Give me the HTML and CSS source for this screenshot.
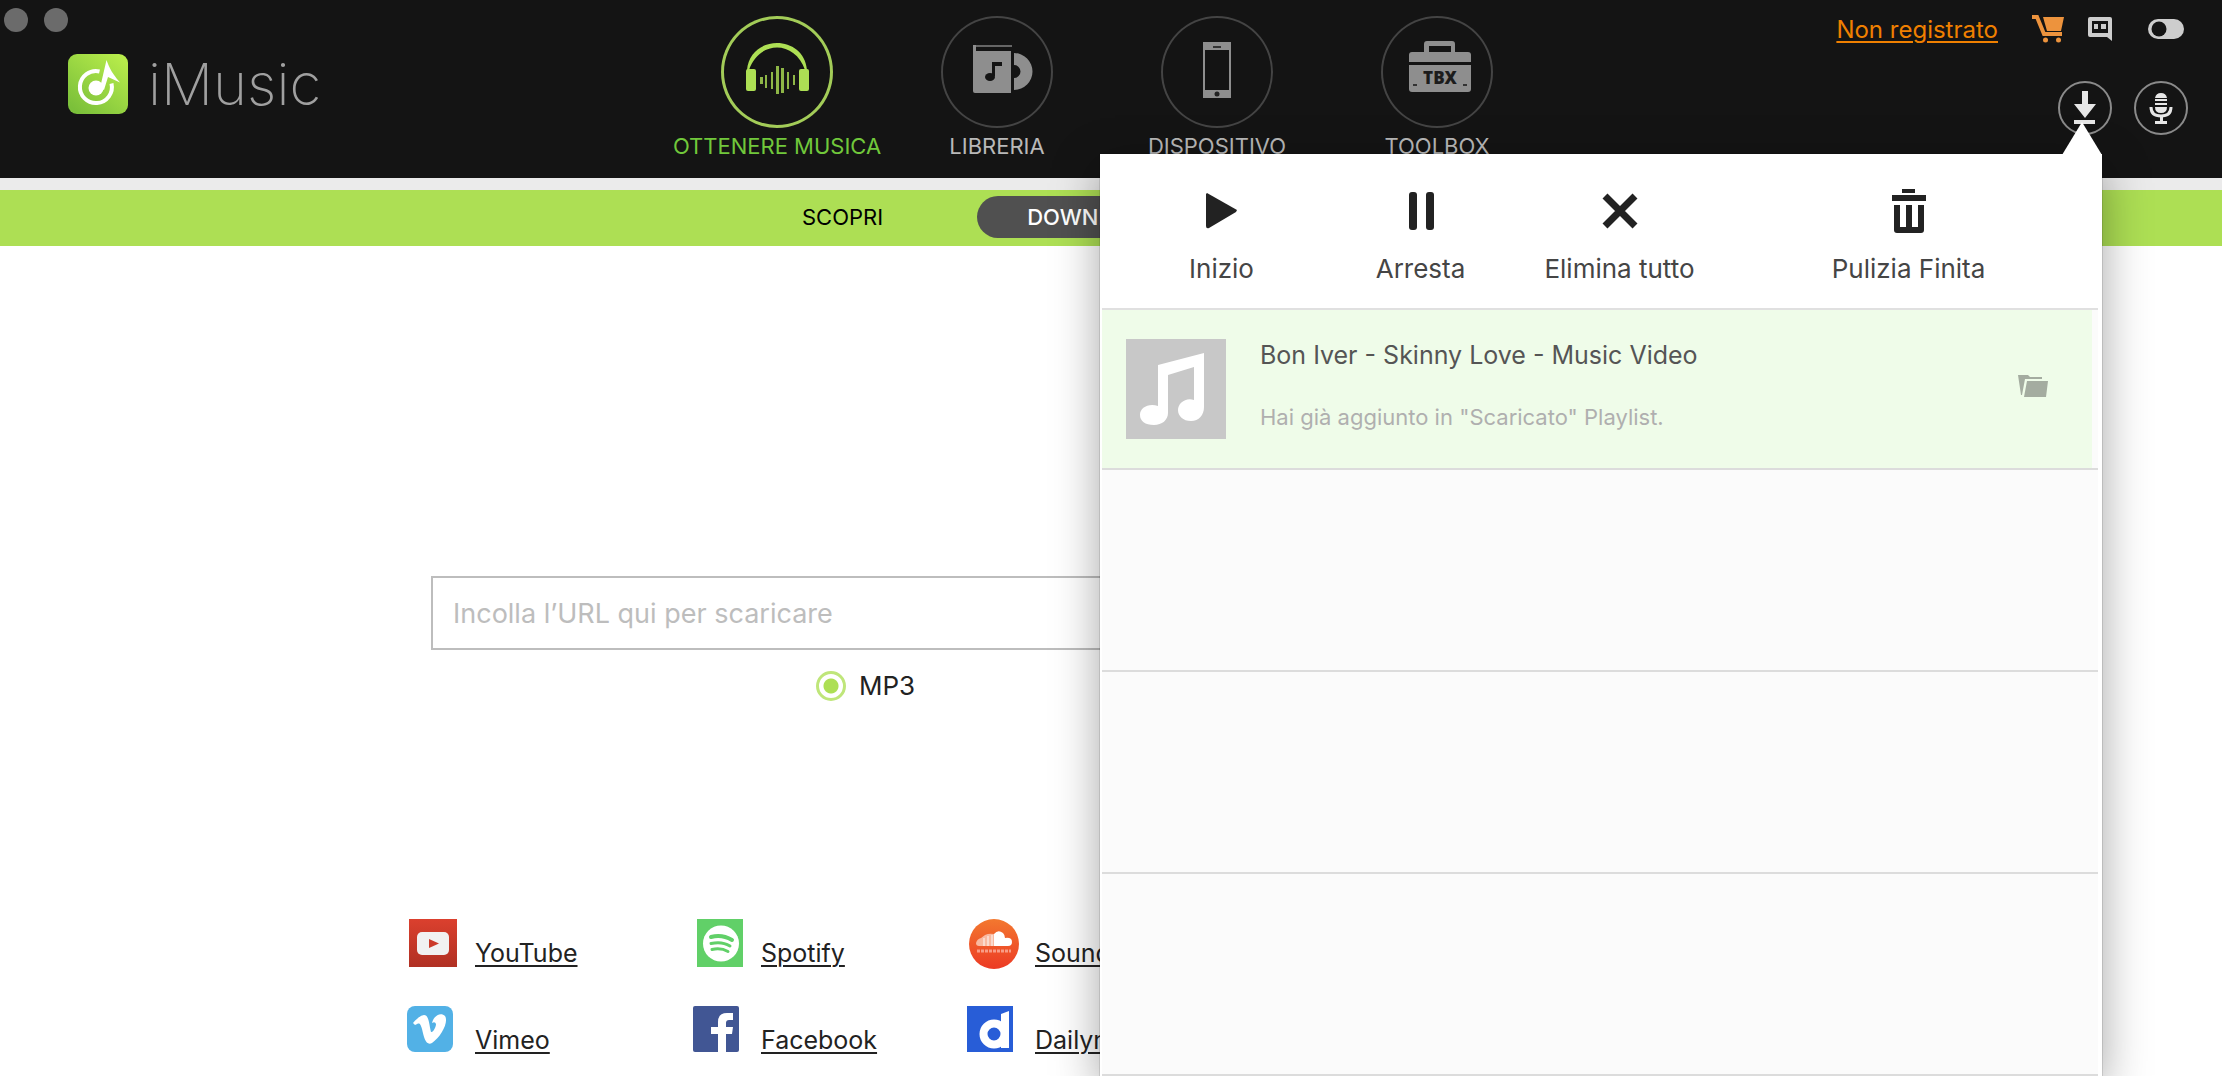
FILE: index.html
```html
<!DOCTYPE html>
<html lang="it">
<head>
  <meta charset="UTF-8">
  <title>iMusic</title>
  <link rel="stylesheet" href="styles.css">
</head>
<body>
  <header class="header">
    <div class="left">
      <div class="window-dots">
        <span class="dot"></span>
        <span class="dot"></span>
      </div>
      <div class="brand">
        <svg width="60" height="60" viewBox="0 0 60 60">
          <defs>
            <linearGradient id="logoFill" x1="1" y1="0" x2="0.2" y2="1">
              <stop offset="0" stop-color="#bdf04c"/>
              <stop offset="1" stop-color="#7bc03a"/>
            </linearGradient>
          </defs>
          <rect width="60" height="60" rx="9" fill="url(#logoFill)"/>
          <path d="M31.500 17.500A16 16 0 1 0 43.500 29.500" fill="none" stroke="#fff" stroke-width="4"/>
          <circle cx="28" cy="34" r="7.500" fill="#fff"/>
          <path d="M32 34L38.500 6C40.500 11 42 17 52 28.500L40 23L36 36Z" fill="#fff"/>
        </svg>
        <span class="brand-name">iMusic</span>
      </div>
    </div>

    <nav class="main-nav">
      <button class="nav-item active">
        <span class="nav-circle">
          <svg width="112" height="112" viewBox="0 0 112 112" fill="currentColor">
            <path d="M26 54C29 18 83 18 86 54L84 54C74 24 38 24 28 54Z"/>
            <rect x="25" y="53" width="10" height="22" rx="2"/>
            <rect x="78" y="53" width="10" height="22" rx="2"/>
            <g opacity="0.8">
              <rect x="39" y="61" width="3" height="7"/>
              <rect x="44" y="59" width="2" height="13"/>
              <rect x="50" y="56" width="2" height="17"/>
              <rect x="55" y="50" width="3" height="28"/>
              <rect x="60" y="52" width="3" height="25"/>
              <rect x="66" y="56" width="2" height="17"/>
              <rect x="72" y="59" width="2" height="10"/>
            </g>
          </svg>
        </span>
        OTTENERE MUSICA
      </button>
      <button class="nav-item">
        <span class="nav-circle">
          <svg width="112" height="112" viewBox="0 0 112 112" fill="#8e8e8e">
            <rect x="33" y="29" width="38" height="2" fill="#666"/>
            <rect x="32" y="29" width="3" height="10"/>
            <path d="M32 35H70V77H34Q32 77 32 75Z"/>
            <path d="M73 37A18.500 18.500 0 0 1 73 74V62A6.500 6.500 0 0 0 73 49Z"/>
            <path d="M51 46H61V50H54V60H51Z" fill="#141414"/>
            <ellipse cx="49" cy="61" rx="5" ry="4" fill="#141414"/>
          </svg>
        </span>
        LIBRERIA
      </button>
      <button class="nav-item">
        <span class="nav-circle">
          <svg width="112" height="112" viewBox="0 0 112 112">
            <path d="M42 26H70V82H42ZM44 34V74H68V34Z" fill="#8e8e8e" fill-rule="evenodd"/>
            <rect x="52" y="30" width="8" height="2" fill="#333"/>
            <circle cx="56" cy="78" r="2.500" fill="#222"/>
          </svg>
        </span>
        DISPOSITIVO
      </button>
      <button class="nav-item">
        <span class="nav-circle">
          <svg width="112" height="112" viewBox="0 0 112 112" fill="#8e8e8e">
            <path d="M43 36V28Q43 25 46 25H71Q74 25 74 28V36H70V30H48V36Z"/>
            <path d="M28 46V39Q28 36 31 36H87Q90 36 90 39V46Z"/>
            <path d="M28 49H90V73Q90 76 87 76H31Q28 76 28 73Z"/>
            <rect x="32" y="68" width="4" height="2" fill="#333"/>
            <rect x="82" y="68" width="4" height="2" fill="#333"/>
            <text class="tbx" x="59" y="68" text-anchor="middle">TBX</text>
          </svg>
        </span>
        TOOLBOX
      </button>
    </nav>

    <div class="right">
      <div class="account">
        <a class="register" href="#">Non registrato</a>
        <button class="icon-btn" aria-label="Carrello">
          <svg width="32" height="28" viewBox="0 0 32 28">
            <path d="M0 2H5L12 19H30" fill="none" stroke="#ed933d" stroke-width="4"/>
            <path d="M11 2H32L29 16H15Z" fill="#ed933d"/>
            <circle cx="13.500" cy="25" r="2.500" fill="#ed933d"/>
            <circle cx="26.500" cy="25" r="2.500" fill="#ed933d"/>
          </svg>
        </button>
        <button class="icon-btn" aria-label="Messaggi">
          <svg width="24" height="24" viewBox="0 0 24 24">
            <path d="M2 0H22Q24 0 24 2V24L19 20H2Q0 20 0 18V2Q0 0 2 0ZM4 4V16H20V4Z" fill="#cdcdcd" fill-rule="evenodd"/>
            <path d="M6 7H10V12H6ZM13 7H18V12H13Z" fill="#cdcdcd"/>
          </svg>
        </button>
        <button class="icon-btn toggle" aria-label="Menu">
          <svg width="36" height="20" viewBox="0 0 36 20">
            <rect width="36" height="20" rx="10" fill="#cdcdcd"/>
            <circle cx="11" cy="10" r="7.500" fill="#141414"/>
          </svg>
        </button>
      </div>
      <div class="tools">
        <button class="round-btn" aria-label="Download">
          <svg width="50" height="50" viewBox="0 0 50 50" fill="#e6e6e6">
            <path d="M22 8H28V21H36L25 35L14 21H22Z"/>
            <rect x="14" y="37" width="21" height="4"/>
          </svg>
        </button>
        <button class="round-btn" aria-label="Registra">
          <svg width="50" height="50" viewBox="0 0 50 50" fill="#e6e6e6">
            <path d="M19 15Q20 10 25 10Q30 10 31 15ZM19 16H31V18H19ZM19 20H31V22H19ZM19 24H31Q31 30 25 30Q19 30 19 24Z"/>
            <path d="M15 24Q15 33 25 33Q35 33 35 24" fill="none" stroke="#e6e6e6" stroke-width="3"/>
            <path d="M24 33H27V38H31V41H19V38H24Z"/>
          </svg>
        </button>
      </div>
    </div>
  </header>

  <div class="tabs">
    <button class="tab">SCOPRI</button>
    <button class="tab selected">DOWNLOAD</button>
  </div>

  <main class="main">
    <input class="url-input" type="text" placeholder="Incolla l’URL qui per scaricare" aria-label="URL">
    <label class="format">
      <input type="radio" name="format" checked>
      MP3
    </label>

    <div class="sites">
      <a class="site" href="#">
        <svg width="52" height="50" viewBox="0 0 52 50">
          <defs>
            <linearGradient id="ytFill" x1="0" y1="0" x2="0" y2="1">
              <stop offset="0" stop-color="#db402e"/>
              <stop offset="1" stop-color="#b03023"/>
            </linearGradient>
          </defs>
          <rect x="2" width="48" height="48" fill="url(#ytFill)"/>
          <rect x="10" y="13" width="32" height="23" rx="5" fill="#f1f1f1"/>
          <path d="M22 20L32 24.500L22 29Z" fill="#cb3a2a"/>
        </svg>
        <span>YouTube</span>
      </a>
      <a class="site" href="#">
        <svg width="52" height="50" viewBox="0 0 52 50">
          <rect x="4" width="46" height="48" fill="#61d068"/>
          <circle cx="28" cy="24.500" r="18" fill="#fff"/>
          <g fill="none" stroke="#61d068" stroke-linecap="round">
            <path d="M18 18Q29 15 39 21" stroke-width="4"/>
            <path d="M18 24.500Q29 22 37 27" stroke-width="3"/>
            <path d="M19 30.500Q28 28.500 35 32.500" stroke-width="3"/>
          </g>
        </svg>
        <span>Spotify</span>
      </a>
      <a class="site" href="#">
        <svg width="52" height="50" viewBox="0 0 52 50">
          <defs>
            <linearGradient id="scFill" x1="0" y1="0" x2="0" y2="1">
              <stop offset="0" stop-color="#f3782f"/>
              <stop offset="1" stop-color="#ec3a24"/>
            </linearGradient>
          </defs>
          <circle cx="27" cy="25" r="25" fill="url(#scFill)"/>
          <path d="M27 27V15Q31 10 36 14Q38 16 38 19Q45 18 45 23Q45 27 41 27Z" fill="#fff"/>
          <path d="M9 24Q10 20 14 19L18 16Q22 14 27 15V27H12Q9 27 9 24Z" fill="#f9b9a0"/>
          <path d="M17 19V27M21 17V27M25 16V27" stroke="#fbd9cc" stroke-width="2"/>
          <path d="M10 32H44" stroke="#f99c86" stroke-width="3" stroke-dasharray="3 1"/>
        </svg>
        <span>SoundCloud</span>
      </a>
      <a class="site" href="#">
        <svg width="52" height="50" viewBox="0 0 52 50">
          <rect width="46" height="46" rx="8" fill="#52b1e6"/>
          <path d="M6 17Q13 9 17 9C22 9 22 18 24 26C26 27 29 21 29 18Q28 15 25 17C27 9 34 6 38 10C42 16 34 31 25 37C19 40 17 32 15 23C13 16 12 17 8 19Z" fill="#fff"/>
        </svg>
        <span>Vimeo</span>
      </a>
      <a class="site" href="#">
        <svg width="52" height="50" viewBox="0 0 52 50">
          <rect width="46" height="46" rx="2" fill="#415694"/>
          <path d="M25 46V28H18V21H25V16Q25 7 34 7H40V14H36Q33 14 33 17V21H40L39 28H33V46Z" fill="#fff"/>
        </svg>
        <span>Facebook</span>
      </a>
      <a class="site" href="#">
        <svg width="52" height="50" viewBox="0 0 52 50">
          <rect width="46" height="46" fill="#285dd7"/>
          <circle cx="27" cy="28" r="10.500" fill="none" stroke="#fff" stroke-width="8"/>
          <path d="M34 8L42 5V42H34Z" fill="#fff"/>
        </svg>
        <span>Dailymotion</span>
      </a>
    </div>
  </main>

  <!-- download list, opens under the download button -->
  <section class="popup">
    <div class="popup-toolbar">
      <button class="action">
        <svg width="44" height="48" viewBox="0 0 44 48">
          <path d="M7 6L37 23L36 25L9 41Q6 42 6 39V7Z" fill="#222"/>
        </svg>
        Inizio
      </button>
      <button class="action">
        <svg width="44" height="48" viewBox="0 0 44 48" fill="#222">
          <rect x="10" y="5" width="8" height="38" rx="3"/>
          <rect x="27" y="5" width="8" height="38" rx="3"/>
        </svg>
        Arresta
      </button>
      <button class="action">
        <svg width="44" height="48" viewBox="0 0 44 48">
          <path d="M7 9L37 39M37 9L7 39" stroke="#222" stroke-width="7"/>
        </svg>
        Elimina tutto
      </button>
      <button class="action">
        <svg width="44" height="48" viewBox="0 0 44 48" fill="#222">
          <rect x="15" y="2" width="13" height="4"/>
          <rect x="5" y="8" width="34" height="6"/>
          <path d="M7 18H13V40H19V18H25V40H31V18H37V43Q37 46 34 46H10Q7 46 7 43Z"/>
        </svg>
        Pulizia Finita
      </button>
    </div>
    <ul class="downloads">
      <li class="row song">
        <svg width="100" height="100" viewBox="0 0 100 100">
          <rect width="100" height="100" fill="#c8c8c8"/>
          <path d="M32 26L78 14V68C78 76 73 82 65 82C57 82 52 77 52 71C52 64 60 58 68 61V28L42 36V74C42 81 36 86 28 86C19 86 14 82 14 76C14 69 22 64 32 67Z" fill="#fff"/>
        </svg>
        <div class="song-info">
          <div class="song-title">Bon Iver - Skinny Love - Music Video</div>
          <div class="song-status">Hai già aggiunto in "Scaricato" Playlist.</div>
        </div>
        <button class="icon-btn folder" aria-label="Apri cartella">
          <svg width="30" height="22" viewBox="0 0 30 22" fill="#a4aca0">
            <path d="M0 0H10L12 2H24V4H7L4 20H3Z"/>
            <path d="M9 6H30L28 22H6Z"/>
          </svg>
        </button>
      </li>
      <li class="row"></li>
      <li class="row"></li>
      <li class="row"></li>
    </ul>
  </section>
</body>
</html>
```
FILE: styles.css
```css
* {
  box-sizing: border-box;
}

body {
  margin: 0;
  min-height: 100vh;
  overflow: hidden;
  position: relative;
  background: #fff;
  color: #222;
  font-family: Inter, "Liberation Sans", sans-serif;
  font-size: 26px;
}

svg {
  display: block;
  flex: none;
}

button {
  padding: 0;
  border: none;
  background: none;
  color: inherit;
  font: inherit;
  cursor: pointer;
}

.header {
  display: grid;
  grid-template-columns: 1fr auto 1fr;
  height: 178px;
  padding-right: 8px;
  background: #141414;
}

.window-dots {
  display: flex;
  gap: 16px;
  padding: 8px 4px;
}

.dot {
  width: 24px;
  height: 24px;
  border-radius: 50%;
  background: #6b6b6b;
}

.brand {
  display: flex;
  align-items: center;
  gap: 20px;
  padding: 14px 68px;
}

.brand-name {
  color: #a0a0a0;
  font-size: 58px;
  font-weight: 200;
  line-height: 60px;
}

.main-nav {
  display: flex;
}

.nav-item {
  display: flex;
  flex-direction: column;
  align-items: center;
  gap: 4px;
  width: 220px;
  padding-top: 16px;
  color: #b9b9b9;
  font-size: 22px;
  line-height: 28px;
}

.nav-circle {
  border-radius: 50%;
  box-shadow: inset 0 0 0 2px #444;
}

.active {
  color: #71c83b;
}

.active .nav-circle {
  color: #addf54;
  box-shadow: inset 0 0 0 3px #a3cc58;
}

.tbx {
  fill: #1c1c1c;
  font-family: "Open Sans", sans-serif;
  font-size: 17px;
  font-weight: 800;
}

.right {
  display: flex;
  flex-direction: column;
  align-items: flex-end;
  gap: 36px;
  padding: 13px 26px 0 0;
}

.account {
  display: flex;
  align-items: center;
  gap: 24px;
  height: 32px;
  padding-right: 4px;
}

.register {
  margin-right: 10px;
  color: #f08000;
  font-size: 24px;
}

.toggle {
  margin-left: 12px;
}

.tools {
  display: flex;
  gap: 22px;
}

.round-btn {
  width: 54px;
  height: 54px;
  border: 2px solid #8a8a8a;
  border-radius: 50%;
}

.tabs {
  display: flex;
  align-items: flex-start;
  gap: 44px;
  height: 68px;
  padding: 6px 0 0 calc(50% - 359px);
  border-top: 12px solid #ebebeb;
  background: #addf54;
}

.tab {
  height: 42px;
  padding: 0 50px;
  border-radius: 21px;
  color: #000;
  font-size: 22px;
}

.tab.selected {
  background: #505050;
  color: #fff;
  font-weight: 500;
}

.main {
  display: flex;
  flex-direction: column;
  padding: 330px 431px 0;
}

.url-input {
  height: 74px;
  padding: 0 20px;
  border: 2px solid #bdbdbd;
  font: inherit;
  font-size: 27px;
}

.url-input::placeholder {
  color: #bdbdbd;
}

.format {
  display: flex;
  align-items: center;
  gap: 13px;
  margin: 18px 0 0 385px;
  line-height: 36px;
}

.format input {
  appearance: none;
  width: 30px;
  height: 30px;
  margin: 0;
  border: 3px solid #bfe67a;
  border-radius: 50%;
  background: radial-gradient(circle, #addf54 7px, #fff 8px);
}

.sites {
  display: grid;
  grid-template-columns: 286px 274px 1fr;
  gap: 37px 0;
  margin: 215px 0 0 -24px;
}

.site {
  display: flex;
  align-items: flex-end;
  gap: 16px;
  color: #222;
  font-size: 25px;
  line-height: 32px;
}

a {
  text-decoration-thickness: 2px;
  text-underline-offset: 3px;
}

.popup {
  position: absolute;
  top: 154px;
  right: 120px;
  bottom: 0;
  left: calc(50% - 11px);
  padding: 0 4px 0 2px;
  background: #fff;
  box-shadow: 0 0 1px rgba(0, 0, 0, 0.6), 0 14px 44px rgba(0, 0, 0, 0.36);
}

.popup::before {
  content: "";
  position: absolute;
  top: -32px;
  right: 0;
  width: 40px;
  height: 33px;
  background: #fff;
  clip-path: polygon(50% 0, 100% 100%, 0 100%);
}

.popup-toolbar {
  display: grid;
  grid-template-columns: 199px 199px 199px 1fr;
  height: 156px;
  padding-left: 20px;
  border-bottom: 2px solid #e0e0e0;
  color: #454545;
}

.action {
  display: flex;
  flex-direction: column;
  align-items: center;
  gap: 18px;
  padding-top: 33px;
  line-height: 32px;
}

.downloads {
  height: calc(100% - 156px);
  margin: 0;
  padding: 0;
  overflow: hidden;
  background: #fbfbfb;
  list-style: none;
}

.row {
  height: 202px;
  border-bottom: 2px solid #dcdcdc;
}

.song {
  display: flex;
  align-items: center;
  gap: 34px;
  height: 160px;
  padding: 0 50px 0 24px;
  background: linear-gradient(#effce9, #effce9) left / calc(100% - 6px) 100% no-repeat;
}

.song-info {
  flex: 1;
  padding-bottom: 8px;
}

.song-title {
  color: #555;
  font-size: 25px;
  line-height: 32px;
}

.song-status {
  margin-top: 32px;
  color: #afafaf;
  font-size: 22px;
  line-height: 28px;
}

.folder {
  padding-bottom: 6px;
}
```
